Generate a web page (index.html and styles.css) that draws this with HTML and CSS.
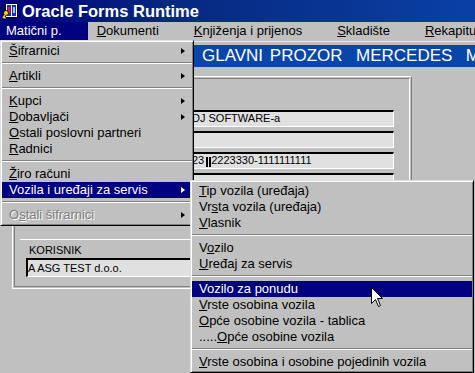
FILE: index.html
```html
<!DOCTYPE html>
<html lang="hr">
<head>
<meta charset="utf-8">
<title>Oracle Forms Runtime</title>
<link rel="stylesheet" href="styles.css">
</head>
<body>
<div class="screen">
  <header class="titlebar">
    <svg class="app-icon" width="16" height="16" viewBox="0 0 16 16">
      <rect x="3.5" y="0.5" width="12" height="14" fill="#fff" stroke="#000"/>
      <rect x="5" y="2" width="4" height="11" fill="#1030c0"/>
      <rect x="10" y="2" width="4" height="11" fill="#1030c0"/>
      <rect x="6" y="4" width="2" height="6" fill="#e02020"/>
      <rect x="11" y="4" width="2" height="6" fill="#c0c0c0"/>
      <circle cx="4" cy="10" r="2.5" fill="#ffd800" stroke="#000" stroke-width="0.8"/>
      <path d="M3 12 L1 15 M2 14 L3.5 15.5" stroke="#ffd800" stroke-width="1.5" fill="none"/>
    </svg>
    <span class="title">Oracle Forms Runtime</span>
  </header>

  <nav class="menubar">
    <span class="mb-item active">Matični p.</span>
    <span class="mb-item"><u>D</u>okumenti</span>
    <span class="mb-item"><u>K</u>njiženja i prijenos</span>
    <span class="mb-item"><u>S</u>kladište</span>
    <span class="mb-item"><u>R</u>ekapitulacije</span>
  </nav>

  <main class="workspace">
    <div class="banner">GLAVNI PROZOR  MERCEDES  M</div>
    <div class="panel">
      <div class="panel-inner">
        <div class="field field-top">DJ SOFTWARE-a</div>
        <div class="field"></div>
        <div class="field">23<span class="caret"></span>2223330-1111111111</div>
        <div class="field"></div>
        <div class="group-line"></div>
        <div class="label">KORISNIK</div>
        <div class="field field-user">A ASG TEST d.o.o.</div>
      </div>
    </div>
  </main>

  <div class="menu menu-main">
    <div class="mi"><span><u>Š</u>ifrarnici</span><i class="arrow"></i></div>
    <div class="sep"></div>
    <div class="mi"><span><u>A</u>rtikli</span><i class="arrow"></i></div>
    <div class="sep"></div>
    <div class="mi"><span><u>K</u>upci</span><i class="arrow"></i></div>
    <div class="mi"><span><u>D</u>obavljači</span><i class="arrow"></i></div>
    <div class="mi"><span><u>O</u>stali poslovni partneri</span></div>
    <div class="mi"><span><u>R</u>adnici</span></div>
    <div class="sep"></div>
    <div class="mi"><span><u>Ž</u>iro računi</span></div>
    <div class="mi hl"><span><u class="dark-u">V</u>ozila i uređaji za servis</span><i class="arrow"></i></div>
    <div class="sep"></div>
    <div class="mi disabled"><span>O<u>s</u>tali šifrarnici</span><i class="arrow"></i></div>
  </div>

  <div class="menu menu-sub">
    <div class="mi"><span><u>T</u>ip vozila (uređaja)</span></div>
    <div class="mi"><span>Vr<u>s</u>ta vozila (uređaja)</span></div>
    <div class="mi"><span><u>V</u>lasnik</span></div>
    <div class="sep"></div>
    <div class="mi"><span>V<u>o</u>zilo</span></div>
    <div class="mi"><span><u>U</u>ređaj za servis</span></div>
    <div class="sep"></div>
    <div class="mi hl"><span>Vozilo za ponudu</span></div>
    <div class="mi"><span><u>V</u>rste osobina vozila</span></div>
    <div class="mi"><span><u>O</u>pće osobine vozila - tablica</span></div>
    <div class="mi"><span>.....<u>O</u>pće osobine vozila</span></div>
    <div class="sep"></div>
    <div class="mi"><span><u>V</u>rste osobina i osobine pojedinih vozila</span></div>
  </div>

  <svg class="cursor" width="13" height="21" viewBox="0 0 13 21">
    <polygon points="0.5,0.5 0.5,16.5 4.5,12.5 7.5,19.5 9.5,18.5 6.5,11.5 11.5,11.5" fill="#fff" stroke="#000" stroke-width="1"/>
  </svg>
</div>
</body>
</html>
```

FILE: styles.css
```css
html, body {
  margin: 0;
  padding: 0;
  overflow: hidden;
  background: #c0c0c0;
}

.screen {
  position: relative;
  width: 475px;
  height: 373px;
  overflow: hidden;
  background: #c0c0c0;
  font-family: "Liberation Sans", Arial, sans-serif;
  color: #000;
}

u {
  text-decoration: underline;
  text-underline-offset: 1px;
}

/* ---------- title bar ---------- */
.titlebar {
  display: flex;
  align-items: center;
  height: 22px;
  background: linear-gradient(to right, #000080 0%, #06287f 35%, #0a40a6 100%);
  color: #fff;
}

.app-icon {
  margin-left: 2px;
  flex: none;
}

.title {
  margin-left: 4px;
  font-size: 16.5px;
  font-weight: bold;
  line-height: 22px;
  white-space: nowrap;
}

/* ---------- menu bar ---------- */
.menubar {
  display: flex;
  height: 18px;
  font-size: 13px;
  line-height: 18px;
  white-space: nowrap;
  background: #c0c0c0;
}

.mb-item {
  padding: 0 26px 0 6px;
  margin-right: 3px;
  flex: none;
}

.mb-item.active {
  background: #000080;
  color: #fff;
}

/* ---------- workspace / form ---------- */
.workspace {
  border-top: 1px solid #c0c0c0;
  box-shadow: inset 0 1px #e4e4e4;
  padding-top: 4px;
}

.banner {
  height: 22px;
  line-height: 22px;
  padding-left: 202px;
  background: #0a46aa;
  color: #fff;
  font-size: 17px;
  white-space: pre;
  word-spacing: 2px;
}

.panel {
  box-sizing: border-box;
  width: 400px;
  height: 213px;
  margin: 9px 0 0 12px;
  padding: 1px;
  border: 1px solid;
  border-color: #fff #808080 #fff #fff;
}

.panel-inner {
  box-sizing: border-box;
  height: 100%;
  padding-top: 31px;
  border: 1px solid;
  border-color: #808080 #fff #808080 #808080;
  font-size: 11px;
}

.field {
  box-sizing: border-box;
  width: 208px;
  height: 17px;
  margin: 0 0 4px 171px;
  padding-left: 4px;
  background: #e0e0e0;
  border-style: solid;
  border-width: 2px 1px 1px 2px;
  border-color: #000 #fff #fff #000;
  line-height: 13px;
  white-space: nowrap;
  overflow: hidden;
}

.caret {
  display: inline-block;
  box-sizing: border-box;
  width: 5px;
  height: 10px;
  margin-left: 2px;
  vertical-align: -3px;
  border-left: 2px solid #000;
  border-right: 2px solid #000;
}

.group-line {
  margin: 49px 0 0 5px;
  border-top: 1px solid #fff;
}

.label {
  margin: 4px 0 0 14px;
  line-height: 13px;
}

.field.field-user {
  width: 368px;
  height: 19px;
  margin: 1px 0 0 11px;
  padding: 2px 0 0 0;
}

/* ---------- drop-down menus ---------- */
.menu {
  position: absolute;
  box-sizing: border-box;
  padding: 2px 1px;
  background: #c0c0c0;
  border: 1px solid;
  border-color: #dfdfdf #000 #000 #dfdfdf;
  box-shadow: inset 1px 1px #fff, inset -1px -1px #808080;
  font-size: 13px;
  white-space: nowrap;
}

.menu-main {
  left: 0;
  top: 40px;
  width: 194px;
}

.menu-sub {
  left: 190px;
  top: 180px;
  width: 284px;
}

.mi {
  display: flex;
  align-items: center;
  height: 16px;
  line-height: 16px;
  padding-left: 7px;
}

.mi.hl {
  background: #000080;
  color: #fff;
}

.mi.disabled {
  color: #808080;
  text-shadow: 1px 1px 0 #fff;
}

.dark-u {
  text-decoration-color: #202040;
}

.arrow {
  margin-left: auto;
  margin-right: 7px;
  width: 0;
  height: 0;
  border-left: 4px solid #000;
  border-top: 3.5px solid transparent;
  border-bottom: 3.5px solid transparent;
}

.mi.hl .arrow {
  border-left-color: #fff;
}

.sep {
  margin: 3px 0 4px;
  border-top: 1px solid #808080;
  border-bottom: 1px solid #fff;
}

/* ---------- mouse pointer (overlay) ---------- */
.cursor {
  position: absolute;
  left: 371px;
  top: 287px;
}
```
